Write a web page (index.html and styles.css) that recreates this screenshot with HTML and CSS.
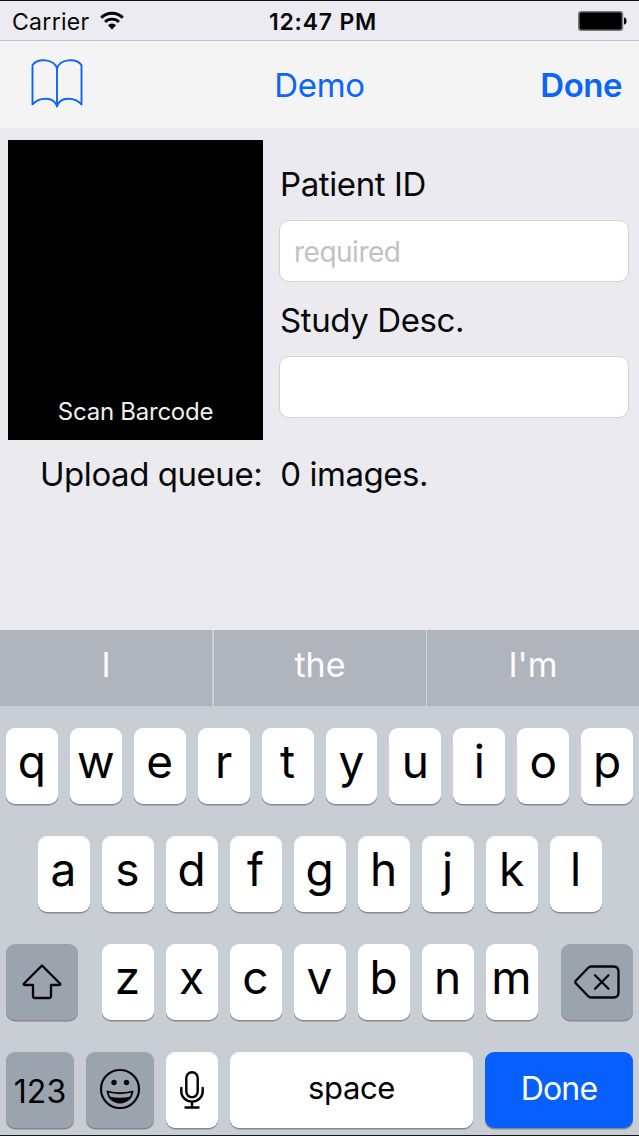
FILE: index.html
```html
<!DOCTYPE html>
<html lang="en">
<head>
    <meta charset="UTF-8">
    <meta name="viewport" content="width=device-width, initial-scale=1.0">
    <title>Demo</title>
    <link rel="stylesheet" href="styles.css">
</head>
<body>
    <div class="status-bar">
        <div class="carrier">
            <span>Carrier</span>
            <svg class="wifi" width="24" height="19" viewBox="0 0 24 19">
                <path d="M1.2 6.6a15.4 15.4 0 0 1 21.6 0" fill="none" stroke="#000" stroke-width="3"/>
                <path d="M5.1 11a9.8 9.8 0 0 1 13.8 0" fill="none" stroke="#000" stroke-width="2.8"/>
                <path d="M12 18.4l-4-4.2a5.7 5.7 0 0 1 8 0z"/>
            </svg>
        </div>
        <div class="time">12:47 PM</div>
        <svg class="battery" width="50" height="20" viewBox="0 0 50 20">
            <rect x="0.8" y="0.8" width="43.6" height="18.4" rx="2.5" fill="#000" stroke="#77777b" stroke-width="1.6"/>
            <path d="M46 6.5c3.4 0 3.4 7 0 7z"/>
        </svg>
    </div>

    <div class="nav-bar">
        <svg class="book" width="52" height="50" viewBox="0 0 52 50">
            <path d="M26 9.500C23-.5 7-1 1.500 6v39.500C8 38 23 37 26 47.500 29 37 44 38 50.500 45.500V6C45-1 29-.5 26 9.500zM26 9.500v38" fill="none" stroke="#0c66f5" stroke-width="1.9" stroke-linejoin="round"/>
        </svg>
        <div class="nav-title">Demo</div>
        <div class="nav-done">Done</div>
    </div>

    <div class="content">
        <div class="form">
            <div class="scanner">Scan Barcode</div>
            <div class="fields">
                <label for="patient-id">Patient ID</label>
                <input type="text" id="patient-id" placeholder="required">
                <label for="study-desc">Study Desc.</label>
                <input type="text" id="study-desc">
            </div>
        </div>
        <div class="queue">
            <div class="queue-label">Upload queue:</div>
            <div class="queue-count">0 images.</div>
        </div>
    </div>

    <div class="keyboard">
        <div class="suggestions">
            <div>I</div>
            <div>the</div>
            <div>I'm</div>
        </div>
        <div class="keys">
            <div class="row">
                <div class="key">q</div>
                <div class="key">w</div>
                <div class="key">e</div>
                <div class="key">r</div>
                <div class="key">t</div>
                <div class="key">y</div>
                <div class="key">u</div>
                <div class="key">i</div>
                <div class="key">o</div>
                <div class="key">p</div>
            </div>
            <div class="row">
                <div class="key">a</div>
                <div class="key">s</div>
                <div class="key">d</div>
                <div class="key">f</div>
                <div class="key">g</div>
                <div class="key">h</div>
                <div class="key">j</div>
                <div class="key">k</div>
                <div class="key">l</div>
            </div>
            <div class="row spread">
                <div class="key grey wide">
                    <svg width="40" height="36" viewBox="0 0 40 36">
                        <path d="M20 1.500L38 19.500q1 1.500-1 1.500H29v11q0 2-2 2H13q-2 0-2-2V21H3q-2 0-1-1.500z" fill="none" stroke="#05070a" stroke-width="2.300" stroke-linejoin="round"/>
                    </svg>
                </div>
                <div class="letters">
                    <div class="key">z</div>
                    <div class="key">x</div>
                    <div class="key">c</div>
                    <div class="key">v</div>
                    <div class="key">b</div>
                    <div class="key">n</div>
                    <div class="key">m</div>
                </div>
                <div class="key grey wide">
                    <svg width="46" height="34" viewBox="0 0 46 34">
                        <path d="M17 1.500h22.500q5 0 5 5v21q0 5-5 5H17q-1.500 0-3-1.500L1.800 18.300q-1.200-1.300 0-2.600L14 3q1.500-1.500 3-1.500z" fill="none" stroke="#05070a" stroke-width="2.300" stroke-linejoin="round"/>
                        <path d="M21 10.200l13.500 13.500M34.500 10.200L21 23.700" fill="none" stroke="#05070a" stroke-width="2.300" stroke-linecap="round"/>
                    </svg>
                </div>
            </div>
            <div class="row">
                <div class="key grey numbers">123</div>
                <div class="key grey emoji">
                    <svg width="42" height="42" viewBox="0 0 42 42">
                        <circle cx="21" cy="21" r="19" fill="none" stroke="#05070a" stroke-width="2.200"/>
                        <circle cx="15" cy="14.500" r="2.700" fill="#05070a"/>
                        <circle cx="27.500" cy="14.500" r="2.700" fill="#05070a"/>
                        <path d="M8.500 23.500q12.500 3.500 25 0C32.500 30.500 27.500 34.500 21 34.500S9.500 30.500 8.500 23.500z" fill="none" stroke="#05070a" stroke-width="1.800" stroke-linejoin="round"/>
                        <path d="M10.500 28.500q10.500 2.500 21 0C29 33 25.500 34.500 21 34.500S13 33 10.500 28.500z" fill="#05070a"/>
                    </svg>
                </div>
                <div class="key mic">
                    <svg width="24" height="38" viewBox="0 0 24 38">
                        <rect x="6.300" y="1.300" width="11.400" height="25" rx="5.700" fill="none" stroke="#000" stroke-width="2.400"/>
                        <path d="M1.300 17v3.500a10.700 10.200 0 0 0 21.400 0V17M12 31v5.500M5.500 36.500h13" fill="none" stroke="#000" stroke-width="2.400" stroke-linecap="round"/>
                    </svg>
                </div>
                <div class="key space">space</div>
                <div class="key done">Done</div>
            </div>
        </div>
    </div>
</body>
</html>
```

FILE: styles.css
```css
* {
    box-sizing: border-box;
}

body {
    margin: 0;
    height: 1136px;
    display: flex;
    flex-direction: column;
    overflow: hidden;
    font-family: Inter, Roboto, sans-serif;
    background-color: #ebebef;
    color: #08080a;
    border-top: 1px solid #120c1c;
    border-bottom: 1px solid #15151d;
}

.status-bar {
    height: 40px;
    display: grid;
    grid-template-columns: 1fr auto 1fr;
    align-items: center;
    padding: 1px 11px 0 12px;
    font-size: 23px;
    background-color: #ebebf0;
    border-bottom: 1px solid #c2c2c6;
}

.carrier {
    display: flex;
    align-items: center;
    gap: 10px;
    padding-top: 2px;
    letter-spacing: 0.3px;
}

.wifi {
    margin-top: -3px;
}

.time {
    padding-top: 2px;
    margin-left: 6px;
    font-weight: 600;
    letter-spacing: 0.8px;
}

.battery {
    justify-self: end;
}

.nav-bar {
    height: 87px;
    display: grid;
    grid-template-columns: 1fr auto 1fr;
    align-items: center;
    padding: 0 17px 0 31px;
    font-size: 33px;
    color: #0c66f5;
    background-color: #f4f4f5;
}

.book {
    margin-top: -1px;
}

.nav-title {
    margin-left: -14px;
    letter-spacing: -0.3px;
}

.nav-done {
    justify-self: end;
    font-weight: 600;
    letter-spacing: -0.5px;
}

.content {
    height: 502px;
    padding: 12px 10px 0 8px;
}

.form {
    display: flex;
    gap: 16px;
    height: 300px;
}

.scanner {
    width: 255px;
    display: flex;
    align-items: flex-end;
    justify-content: center;
    padding-bottom: 14px;
    font-size: 24px;
    letter-spacing: -0.25px;
    color: #eee;
    background-color: #000;
}

.fields {
    flex: 1;
    padding-top: 18px;
}

label {
    display: block;
    height: 52px;
    line-height: 52px;
    font-size: 33px;
    letter-spacing: -0.4px;
    padding-left: 1px;
}

input {
    display: block;
    width: 350px;
    height: 62px;
    margin: 10px 0 12px;
    padding: 2px 14px 0;
    font-family: inherit;
    font-size: 28px;
    letter-spacing: -0.5px;
    background-color: #fff;
    border: 1px solid #d2d2d6;
    border-radius: 10px;
}

input::placeholder {
    color: #c3c1c5;
}

.queue {
    display: flex;
    gap: 18px;
    padding-left: 32px;
    line-height: 68px;
    font-size: 33px;
    letter-spacing: -0.45px;
}

.keyboard {
    flex: 1;
    background-color: #c9cdd4;
}

.suggestions {
    height: 76px;
    display: grid;
    grid-template-columns: 213px 213px 213px;
    text-align: center;
    line-height: 69px;
    font-size: 34px;
    color: #fff;
    background-color: #afb4bd;
}

.suggestions div + div {
    border-left: 1px solid #d0d4da;
}

.suggestions div:first-child {
    border-right: 1px solid #c2c6ce;
}

.keys {
    display: flex;
    flex-direction: column;
    gap: 32px;
    padding: 21.5px 6px 0;
}

.row {
    display: flex;
    justify-content: center;
    gap: 12px;
    height: 76px;
}

.spread {
    justify-content: space-between;
    gap: 0;
}

.letters {
    display: flex;
    gap: 12px;
}

.key {
    width: 52px;
    height: 76px;
    display: flex;
    justify-content: center;
    align-items: center;
    padding-bottom: 9px;
    font-size: 46px;
    font-weight: 400;
    color: #000;
    background-color: #fff;
    border-radius: 9px;
    box-shadow: 0 1.5px 0 #888b90;
}

.key.grey {
    padding-bottom: 0;
    background-color: #9ba4ae;
    box-shadow: 0 1.5px 0 #84888f;
}

.key.wide {
    width: 72px;
}

.key.numbers {
    width: 68px;
    font-size: 32px;
    padding-top: 4px;
}

.key.emoji {
    width: 68px;
    padding-bottom: 1px;
}

.key.mic {
    padding-right: 1px;
    padding-bottom: 0;
}

.key.space {
    flex: 1;
    padding-bottom: 4px;
    font-size: 31px;
    letter-spacing: -0.4px;
}

.key.done {
    width: 148px;
    padding-bottom: 3px;
    font-size: 32px;
    letter-spacing: -0.8px;
    color: #fff;
    background-color: #0760fd;
}
```
